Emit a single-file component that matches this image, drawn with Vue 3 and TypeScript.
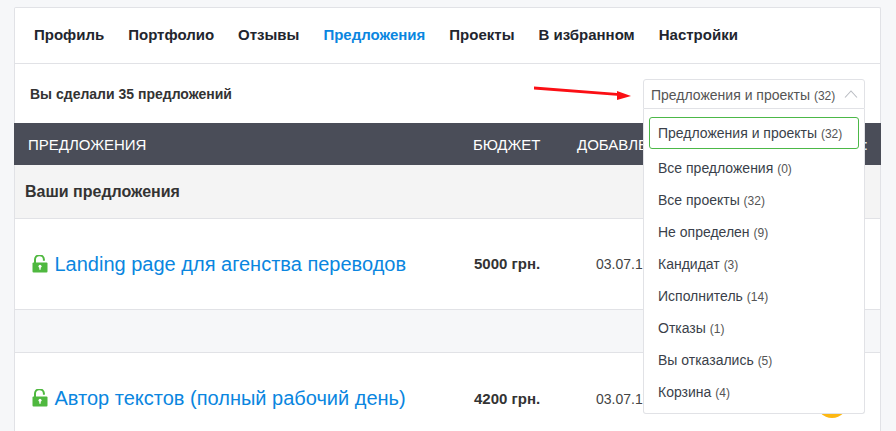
<script setup lang="ts">
const tabs = ['Профиль', 'Портфолио', 'Отзывы', 'Предложения', 'Проекты', 'В избранном', 'Настройки']
const options = [
  { label: 'Все предложения', count: 0 },
  { label: 'Все проекты', count: 32 },
  { label: 'Не определен', count: 9 },
  { label: 'Кандидат', count: 3 },
  { label: 'Исполнитель', count: 14 },
  { label: 'Отказы', count: 1 },
  { label: 'Вы отказались', count: 5 },
  { label: 'Корзина', count: 4 },
]
const rows = [
  { title: 'Landing page для агенства переводов', budget: '5000 грн.', date: '03.07.17' },
  { title: 'Автор текстов (полный рабочий день)', budget: '4200 грн.', date: '03.07.17' },
]
</script>

<template>
  <div class="page">
    <div class="card">
      <nav class="tabs">
        <a v-for="t in tabs" :key="t" class="tab" :class="{ active: t === 'Предложения' }">{{ t }}</a>
      </nav>
      <div class="filter">
        <b class="summary">Вы сделали 35 предложений</b>
      </div>
      <div class="thead">
        <span class="c1">ПРЕДЛОЖЕНИЯ</span>
        <span class="c2">БЮДЖЕТ</span>
        <span class="c3">ДОБАВЛЕНО</span>
        <span class="c4">СТАТУС:</span>
      </div>
      <div class="group">Ваши предложения</div>
      <template v-for="(r, i) in rows" :key="r.title">
        <div class="spacer" v-if="i > 0"></div>
        <div class="row" :class="{ last: i > 0 }">
          <div class="c1 title">
            <svg class="lock" width="16" height="18" viewBox="0 0 16 18">
              <path d="M3 8V5a4.4 4.4 0 0 1 8.9-.6v1.4" fill="none" stroke="#4fb83f" stroke-width="2" />
              <rect x="0.5" y="7.5" width="15" height="10" rx="1" fill="#4fb83f" />
              <circle cx="8" cy="11.3" r="1.5" fill="#fff" />
              <rect x="7.3" y="11.5" width="1.4" height="3.2" fill="#fff" />
            </svg>
            <a>{{ r.title }}</a>
          </div>
          <b class="c2 budget">{{ r.budget }}</b>
          <span class="c3 date">{{ r.date }}</span>
          <span v-if="i > 0" class="dot"></span>
        </div>
      </template>
    </div>

    <svg class="arrow" width="102" height="20" viewBox="0 0 102 20">
      <path d="M1 1.5 L84 8 L84 6 L98 11 L84 15 L84 10.8 L1 4.5 Z" fill="#fb0f14" />
    </svg>

    <div class="select">
      <div class="current">
        <span class="current-label">Предложения и проекты <small>(32)</small></span>
        <svg width="14" height="8" viewBox="0 0 14 8">
          <path d="M1 7.5 L7 1 L13 7.5" fill="none" stroke="#b9bcc2" stroke-width="1.1" />
        </svg>
      </div>
      <ul class="menu">
        <li class="selected">Предложения и проекты <small>(32)</small></li>
        <li v-for="o in options" :key="o.label">{{ o.label }} <small>({{ o.count }})</small></li>
      </ul>
    </div>
  </div>
</template>

<style>
html, body { margin: 0; background: #f6f7f9; }
</style>

<style scoped>
.page {
  position: relative;
  width: 896px;
  height: 431px;
  overflow: hidden;
  padding-top: 7px;
  box-sizing: border-box;
  background: #f6f7f9;
  font-family: "Liberation Sans", Arial, sans-serif;
  color: #333;
}
.card {
  margin-left: 14px;
  width: 867px;
  box-sizing: border-box;
  background: #fff;
  border: 1px solid #e1e2e6;
  border-bottom: 0;
  border-radius: 2px 2px 0 0;
}
.tabs {
  display: flex;
  gap: 24px;
  height: 55px;
  box-sizing: content-box;
  align-items: center;
  padding-left: 19px;
  padding-bottom: 0;
  border-bottom: 1px solid #e1e2e6;
}
.tab {
  font-size: 15px;
  font-weight: 700;
  color: #22252e;
  margin-top: -3px;
}
.tab.active { color: #0a86e0; }
.filter {
  height: 59px;
  display: flex;
  align-items: center;
  padding-left: 15px;
}
.summary { font-size: 14px; color: #333; }
.thead {
  display: flex;
  align-items: center;
  height: 42px;
  margin: 0 -1px;
  padding-right: 13px;
  background: #4a4d58;
  color: #fff;
  font-size: 15px;
  white-space: nowrap;
  overflow: hidden;
}
.c1 { width: 459px; flex: none; padding-left: 14px; box-sizing: border-box; }
.c2 { width: 104px; flex: none; }
.thead .c3 { flex: 1; }
.group {
  height: 54px;
  line-height: 53px;
  box-sizing: border-box;
  background: #f4f4f4;
  border-bottom: 1px solid #e1e2e6;
  padding-left: 10px;
  font-size: 16px;
  font-weight: 700;
  color: #333;
}
.row {
  position: relative;
  display: flex;
  align-items: center;
  height: 91px;
  box-sizing: border-box;
  border-bottom: 1px solid #e1e2e6;
  background: #fff;
}
.row.last { border-bottom: 0; }
.spacer {
  height: 43px;
  box-sizing: border-box;
  background: #f6f7f9;
  border-bottom: 1px solid #e1e2e6;
}
.title {
  display: flex;
  align-items: center;
  gap: 6.5px;
  padding-left: 17px;
  font-size: 20px;
  color: #0a86e0;
  white-space: nowrap;
}
.title a { color: #0a86e0; }
.lock { flex: none; margin-top: -1px; }
.budget { font-size: 15px; color: #333; margin-top: -1px; }
.date { font-size: 14px; margin-left: 18px; color: #444; }
.dot {
  position: absolute;
  left: 801px;
  top: 33px;
  width: 32px;
  height: 32px;
  border-radius: 50%;
  background: #fdb813;
}
.arrow {
  position: absolute;
  left: 533px;
  top: 85px;
}
.select {
  position: absolute;
  left: 643px;
  top: 79px;
  width: 222px;
  font-size: 14px;
  color: #3a3f4a;
}
.current {
  height: 30px;
  box-sizing: border-box;
  background: #fff;
  border: 1px solid #e1e2e6;
  border-radius: 3px 3px 0 0;
  padding: 0 6px 0 7px;
  display: flex;
  align-items: center;
  justify-content: space-between;
  color: #555;
}
.current-label { padding-top: 1px; }
.menu {
  list-style: none;
  margin: 0;
  padding: 8px 5px 5px;
  height: 305px;
  box-sizing: border-box;
  background: #fff;
  border: 1px solid #e1e2e6;
  border-top: 0;
  border-radius: 0 0 3px 3px;
}
.menu li {
  height: 32px;
  line-height: 32px;
  padding-left: 9px;
  color: #3a3f4a;
  white-space: nowrap;
}
.menu li.selected {
  line-height: 30px;
  box-sizing: border-box;
  padding-left: 8px;
  border: 1px solid #4cb848;
  border-radius: 3px;
  margin-bottom: 3px;
}
small { font-size: 12px; color: #555; }
</style>
